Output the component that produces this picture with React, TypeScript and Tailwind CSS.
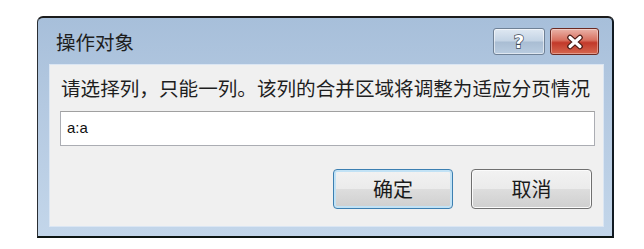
import React from 'react';

const cjk = "font-['Microsoft_YaHei','Noto_Sans_CJK_SC',sans-serif]";

function TitleButton({ kind }: { kind: 'help' | 'close' }) {
  if (kind === 'help') {
    return (
      <div className="flex h-[27px] w-[52px] items-center justify-center rounded-[3px] border border-[#6f8196] bg-[linear-gradient(to_bottom,#dfe8f2_0%,#c3d3e4_48%,#a9bdd3_52%,#b9cce0_100%)] shadow-[inset_0_0_0_1px_rgba(255,255,255,0.55)]">
        <span className="font-['DejaVu_Sans',sans-serif] text-[18px] leading-none font-bold text-white [-webkit-text-stroke:1.4px_#3d4a5a] [paint-order:stroke_fill]">
          ?
        </span>
      </div>
    );
  }
  return (
    <div className="flex h-[27px] w-[49px] items-center justify-center rounded-[3px] border border-[#6b2a22] bg-[linear-gradient(to_bottom,#eab3a8_0%,#d8705f_45%,#c2392a_55%,#d5674f_100%)] shadow-[inset_0_0_0_1px_rgba(255,255,255,0.35)]">
      <svg width="22" height="16" viewBox="0 0 22 16">
        <path
          d="M6 3.5 L16 12.5 M16 3.5 L6 12.5"
          stroke="#4a1a14"
          strokeWidth="5.6"
          strokeLinecap="round"
        />
        <path
          d="M6 3.5 L16 12.5 M16 3.5 L6 12.5"
          stroke="#ffffff"
          strokeWidth="3.2"
          strokeLinecap="round"
        />
      </svg>
    </div>
  );
}

function DialogButton({ label, focused }: { label: string; focused?: boolean }) {
  return (
    <button
      className={
        focused
          ? `flex h-[40px] w-[120px] items-center justify-center rounded-[4px] border border-[#3c7fb1] bg-[linear-gradient(to_bottom,#f2f2f2_0%,#ebebeb_50%,#dddddd_51%,#cfcfcf_100%)] shadow-[inset_0_0_0_2px_#c2e2f5] text-[20px] text-[#1a1a1a] ${cjk}`
          : `flex h-[40px] w-[121px] items-center justify-center rounded-[4px] border border-[#707070] bg-[linear-gradient(to_bottom,#f2f2f2_0%,#ebebeb_50%,#dddddd_51%,#cfcfcf_100%)] shadow-[inset_0_0_0_1px_#fbfbfb] text-[20px] text-[#1a1a1a] ${cjk}`
      }
    >
      {label}
    </button>
  );
}

export default function App() {
  return (
    <div className="h-[249px] w-[644px] bg-white pl-[37px] pt-[16px]">
      <div className="flex h-[222px] w-[577px] flex-col rounded-t-[6px] border-t-2 border-r-2 border-b-2 border-l border-t-[#1c1c1c] border-r-[#111a22] border-b-[#0d1512] border-l-[#2a2e33] bg-[linear-gradient(to_bottom,#a7bfda_0%,#b4c9e1_40%,#c3d6ea_100%)]">
        {/* title bar */}
        <div className="flex h-[46px] items-center pl-[18px] pr-[13px]">
          <span className={`flex-1 pt-[2px] text-[19.5px] text-[#1e1e1e] ${cjk}`}>操作对象</span>
          <div className="flex gap-[5px] pt-[1px]">
            <TitleButton kind="help" />
            <TitleButton kind="close" />
          </div>
        </div>

        {/* body */}
        <div className="ml-[11px] mr-[8px] flex h-[163px] flex-col border border-[#dbe6f3] bg-[#f0f0f0] px-[10px]">
          <div className={`pt-[11px] pl-[1px] text-[19.6px] leading-[24px] text-[#1e1e1e] whitespace-nowrap ${cjk}`}>
            请选择列，只能一列。该列的合并区域将调整为适应分页情况
          </div>
          <div className="mt-[11px] flex h-[35px] w-[535px] items-center border border-[#abadb3] border-t-[#a0a0a0] bg-white pl-[6px] font-['Liberation_Sans',sans-serif] text-[15px] text-[#111]">
            a:a
          </div>
          <div className="mt-[23px] flex justify-end gap-[18px] pr-[1px]">
            <DialogButton label="确定" focused />
            <DialogButton label="取消" />
          </div>
        </div>
      </div>
    </div>
  );
}
